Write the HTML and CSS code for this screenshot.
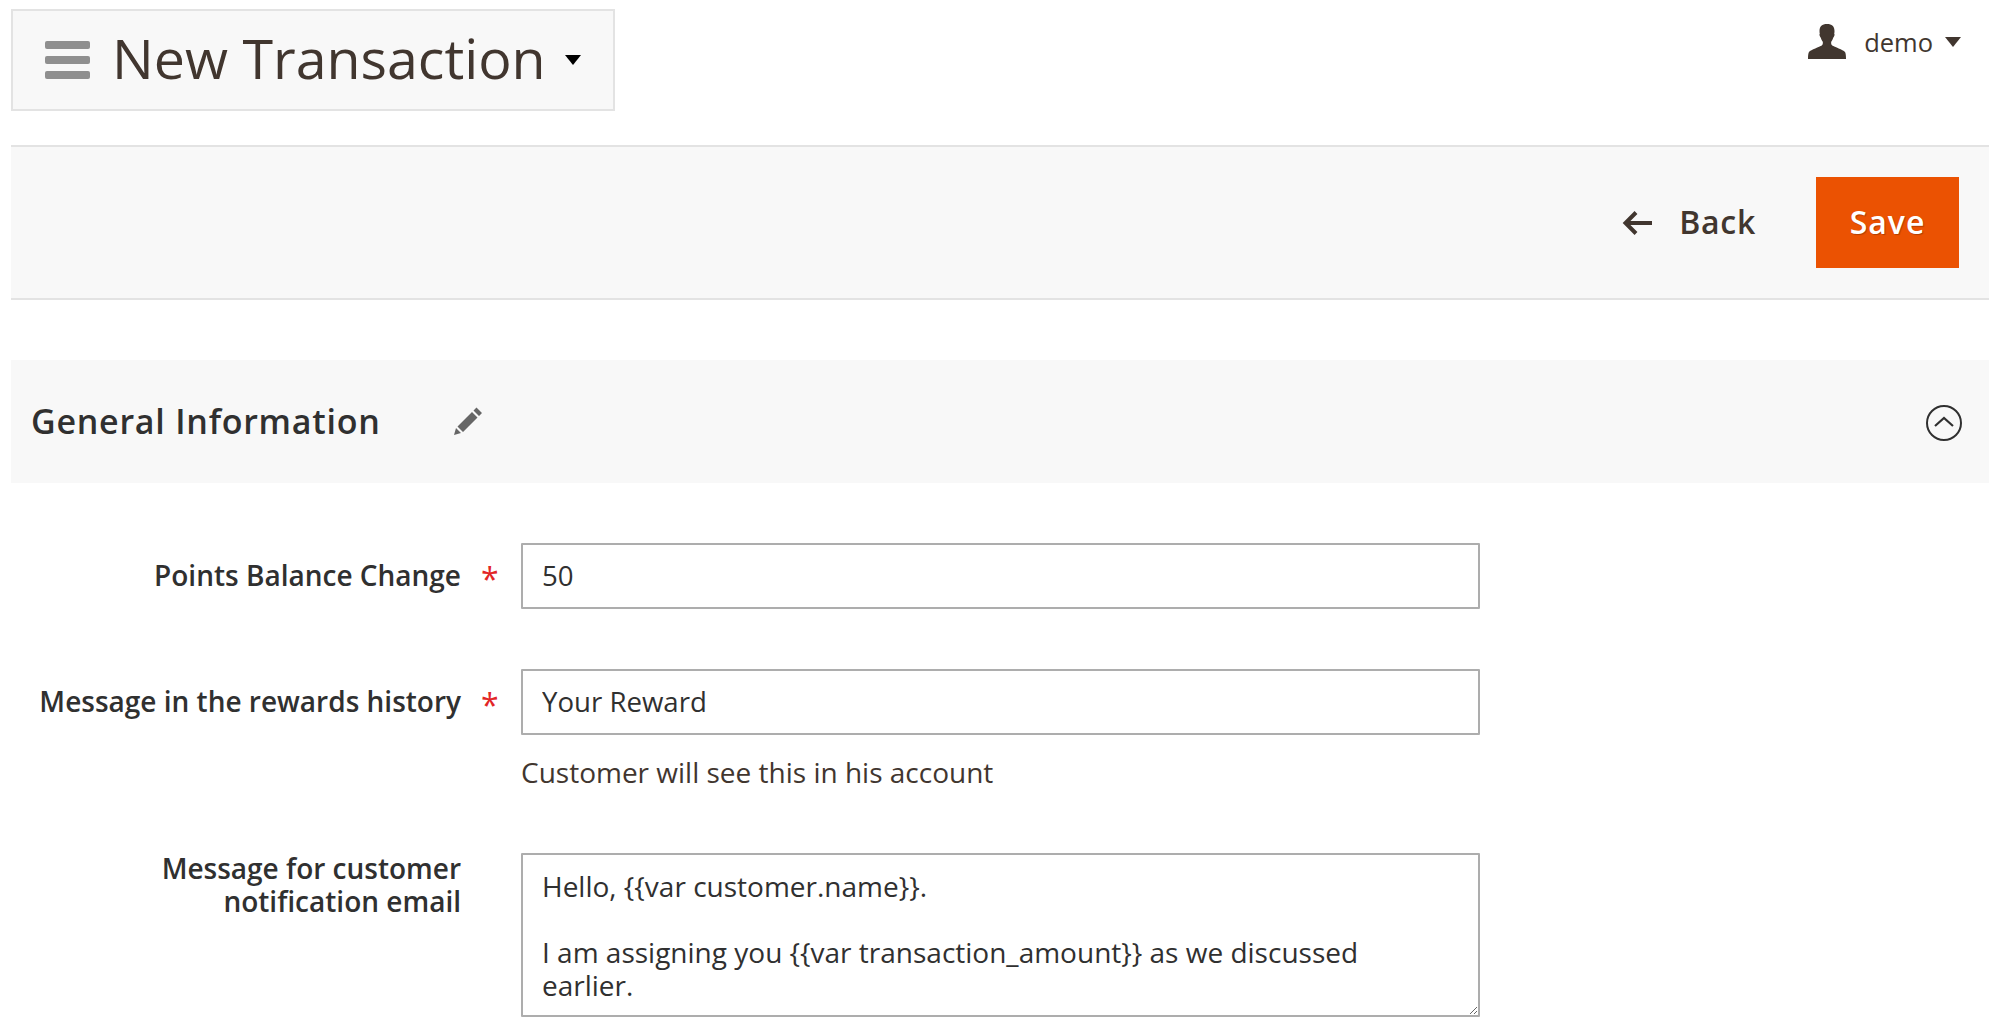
FILE: index.html
```html
<!DOCTYPE html>
<html lang="en">
<head>
  <meta charset="UTF-8" />
  <title>New Transaction</title>
  <link rel="stylesheet" href="styles.css">
</head>
<body>

  <header class="page-header">
    <div class="title-box">
      <svg class="menu-icon" viewBox="0 0 45 38" width="45" height="38">
        <rect x="0" y="0" width="45" height="8" rx="2" />
        <rect x="0" y="15" width="45" height="8" rx="2" />
        <rect x="0" y="30" width="45" height="8" rx="2" />
      </svg>
      <h1>New Transaction</h1>
      <span class="title-caret"></span>
    </div>
    <div class="user-menu">
      <svg class="user-icon" viewBox="0 0 38 35" width="38" height="35">
        <path d="M19 0c-5 0-7.500 2.500-7.500 7 0 1 .1 2 .3 3-.5.3-.5 1 0 2 .3.800.6 1.500 1 1.700.5 1.800 1.200 3 2 4 .2 1.500 0 3-1 3.800C11.500 23 3 25.500 1 28c-.7 1-1 3-1 7h38c0-4-.3-6-1-7-2-2.500-10.500-5-12.800-6.500-1-.8-1.200-2.300-1-3.800.8-1 1.500-2.200 2-4 .4-.2.700-.9 1-1.700.5-1 .5-1.700 0-2 .2-1 .3-2 .3-3 0-4.500-2.500-7-7.500-7z" />
      </svg>
      <span class="user-name">demo</span>
      <span class="user-caret"></span>
    </div>
  </header>

  <div class="toolbar">
    <a class="back-btn">
      <svg viewBox="0 0 30 26" width="30" height="26">
        <path d="M30 13H5M14 2.500L3.500 13 14 23.500" fill="none" stroke="#41362f" stroke-width="4" />
      </svg>
      <span>Back</span>
    </a>
    <button class="save-btn" type="button">Save</button>
  </div>

  <section class="section-head">
    <h2>General Information</h2>
    <svg class="pencil-icon" viewBox="0 0 30 30" width="30" height="30">
      <path d="M1 29l2-7 5 5zM4.500 20.500L19 6l5.500 5.500L10 26zM20.500 4.500L23.500 1.500 29 7l-3 3z" />
    </svg>
    <svg class="collapse-icon" viewBox="0 0 36 36" width="36" height="36">
      <circle cx="18" cy="18" r="17" fill="none" stroke="#303030" stroke-width="2" />
      <path d="M9 21l9-8 9 8" fill="none" stroke="#303030" stroke-width="2.200" />
    </svg>
  </section>

  <form class="form">
    <div class="form-row">
      <label for="points">Points Balance Change</label>
      <span class="required">*</span>
      <input type="text" id="points" value="50" />
    </div>

    <div class="form-row with-note">
      <label for="message">Message in the rewards history</label>
      <span class="required">*</span>
      <div class="field">
        <input type="text" id="message" value="Your Reward" />
        <p class="note">Customer will see this in his account</p>
      </div>
    </div>

    <div class="form-row top-label">
      <label for="email">Message for customer notification email</label>
      <span></span>
      <textarea id="email">Hello, {{var customer.name}}.

I am assigning you {{var transaction_amount}} as we discussed earlier.</textarea>
    </div>
  </form>

</body>
</html>
```

FILE: styles.css
```css
* {
  box-sizing: border-box;
}

body {
  font-family: 'Open Sans', sans-serif;
  background: #fff;
  color: #303030;
  margin: 0;
  padding: 9px 11px 0;
  height: 1024px;
  overflow: hidden;
}

.page-header {
  display: flex;
  justify-content: space-between;
  align-items: flex-start;
  height: 136px;
}

.title-box {
  display: flex;
  align-items: center;
  width: 604px;
  height: 102px;
  padding-left: 32px;
  background: #f8f8f8;
  border: 2px solid #e3e3e3;
}

.menu-icon {
  fill: #8f8f8f;
  flex-shrink: 0;
}

h1 {
  margin: 0 0 4px 22px;
  font-size: 55.500px;
  font-weight: 400;
  line-height: 1;
  color: #41362f;
  white-space: nowrap;
}

.title-caret {
  margin-left: 19px;
  border-style: solid;
  border-width: 10px 8.500px 0;
  border-color: #000 transparent transparent;
}

.user-menu {
  display: flex;
  align-items: center;
  margin: 15px 28px 0 0;
}

.user-icon {
  fill: #41362f;
}

.user-name {
  margin-left: 18px;
  padding-top: 1px;
  font-size: 25.500px;
  color: #41362f;
}

.user-caret {
  margin-left: 12px;
  border-style: solid;
  border-width: 10px 8px 0;
  border-color: #41362f transparent transparent;
}

.toolbar {
  display: flex;
  justify-content: flex-end;
  align-items: center;
  height: 155px;
  padding-right: 30px;
  background: #f8f8f8;
  border-top: 2px solid #e3e3e3;
  border-bottom: 2px solid #e3e3e3;
}

.back-btn {
  display: flex;
  align-items: center;
  gap: 27px;
  margin-right: 60px;
  font-size: 32px;
  font-weight: 600;
  letter-spacing: 0.700px;
  color: #41362f;
}

.back-btn span {
  margin-bottom: 2px;
}

.save-btn {
  width: 143px;
  height: 91px;
  padding-bottom: 3px;
  border: none;
  background: #eb5202;
  color: #fff;
  font-family: inherit;
  font-size: 32px;
  font-weight: 600;
  letter-spacing: 1px;
  text-shadow: 1px 1px 1px rgba(0,0,0,0.25);
}

.section-head {
  display: flex;
  align-items: center;
  height: 123px;
  margin-top: 60px;
  padding: 0 27px 0 20px;
  background: #f8f8f8;
}

.section-head h2 {
  margin: 0 0 2px;
  font-size: 34px;
  font-weight: 600;
  letter-spacing: 0.750px;
  color: #303030;
}

.pencil-icon {
  margin: 0 0 2px 72px;
  fill: #666;
}

.collapse-icon {
  margin: 2px 0 0 auto;
}

.form {
  margin-top: 60px;
}

.form-row {
  display: grid;
  grid-template-columns: 450px 60px 959px;
  margin-bottom: 60px;
}

.form-row.with-note {
  margin-bottom: 63px;
}

.form-row.top-label {
  margin-bottom: 0;
}

.form-row label {
  padding-top: 16px;
  font-size: 28px;
  font-weight: 600;
  line-height: 33px;
  text-align: right;
  color: #303030;
}

.form-row.top-label label {
  padding-top: 0;
}

.required {
  padding: 19px 0 0 20px;
  font-size: 32px;
  line-height: 33px;
  color: #e22626;
}

input[type="text"],
textarea {
  display: block;
  width: 959px;
  border: 2px solid #adadad;
  border-radius: 1px;
  font-family: inherit;
  color: #303030;
  background: #fff;
}

input[type="text"] {
  height: 66px;
  padding: 0 20px 3px 19px;
  font-size: 27.600px;
}

textarea {
  height: 164px;
  margin-top: 1px;
  padding: 15px 36px 0 19px;
  font-size: 28px;
  line-height: 33px;
  overflow: hidden;
  resize: both;
}

.note {
  margin: 21px 0 0;
  font-size: 28px;
  line-height: 33px;
  color: #41362f;
}
```
